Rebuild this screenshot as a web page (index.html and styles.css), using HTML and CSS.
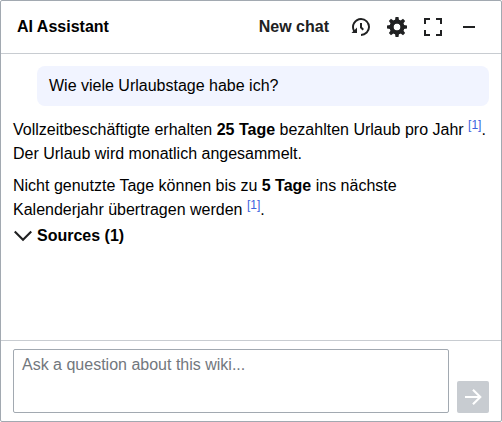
FILE: index.html
```html
<!DOCTYPE html>
<html lang="en">
<head>
<meta charset="utf-8">
<meta name="viewport" content="width=device-width, initial-scale=1">
<title>AI Assistant</title>
<link rel="stylesheet" href="styles.css">
</head>
<body>
<main class="chat">
  <header class="chat-header">
    <h1 class="chat-title">AI Assistant</h1>
    <button class="button" type="button">New chat</button>
    <button class="button button-icon" type="button" aria-label="History">
      <svg class="icon" viewBox="0 0 20 20" aria-hidden="true"><path d="M9 6v5h.06l2.48 2.47 1.41-1.41L11 10.11V6z"/><path d="M10 1a9 9 0 0 0-7.85 13.35L.5 16H6v-5.5l-2.38 2.38A7 7 0 1 1 10 17v2a9 9 0 0 0 0-18"/></svg>
    </button>
    <button class="button button-icon" type="button" aria-label="Settings">
      <svg class="icon" viewBox="0 0 20 20" aria-hidden="true">
        <g transform="translate(10 10)">
          <path id="tooth" d="M1.5-10h-3l-1 6.5h5m0 7h-5l1 6.5h3"/>
          <use href="#tooth" transform="rotate(45)"/>
          <use href="#tooth" transform="rotate(90)"/>
          <use href="#tooth" transform="rotate(135)"/>
        </g>
        <path d="M10 2.5a7.5 7.5 0 0 0 0 15 7.5 7.5 0 0 0 0-15v4a3.5 3.5 0 0 1 0 7 3.5 3.5 0 0 1 0-7"/>
      </svg>
    </button>
    <button class="button button-icon" type="button" aria-label="Full screen">
      <svg class="icon" viewBox="0 0 20 20" aria-hidden="true"><path d="M1 1v6h2V3h4V1zm2 12H1v6h6v-2H3zm14 4h-4v2h6v-6h-2zm0-16h-4v2h4v4h2V1z"/></svg>
    </button>
    <button class="button button-icon" type="button" aria-label="Minimize">
      <svg class="icon" viewBox="0 0 20 20" aria-hidden="true"><path d="M4 9h12v2H4z"/></svg>
    </button>
  </header>

  <section class="messages" aria-label="Conversation">
    <p class="question">Wie viele Urlaubstage habe ich?</p>
    <div class="answer">
      <p>Vollzeitbeschäftigte erhalten <strong>25 Tage</strong> bezahlten Urlaub pro Jahr <sup><a href="#sources">[1]</a></sup>. Der Urlaub wird monatlich angesammelt.</p>
      <p>Nicht genutzte Tage können bis zu <strong>5 Tage</strong> ins nächste Kalenderjahr übertragen werden <sup><a href="#sources">[1]</a></sup>.</p>
    </div>
    <button class="sources" id="sources" type="button" aria-expanded="false">
      <svg class="icon" viewBox="0 0 20 20" aria-hidden="true"><path d="m17.5 4.75-7.5 7.5-7.5-7.5L1 6.25l9 9 9-9z"/></svg>
      Sources (1)
    </button>
  </section>

  <form class="composer">
    <textarea class="composer-input" aria-label="Question" placeholder="Ask a question about this wiki..."></textarea>
    <button class="send" type="submit" aria-label="Send" disabled>
      <svg class="icon" viewBox="0 0 20 20" aria-hidden="true"><path d="M10.7 1.9 9.2 3.4 14.8 9H2v2h12.8l-5.6 5.6 1.5 1.5 8.1-8.1z"/></svg>
    </button>
  </form>
</main>
</body>
</html>
```
FILE: styles.css
```css
* {
  box-sizing: border-box;
}

body {
  margin: 0;
  background: #fff;
  color: #101418;
  font: 16px/24px "Liberation Sans", Arial, sans-serif;
}

p,
h1 {
  margin: 0;
}

button,
textarea {
  font: inherit;
  color: inherit;
}

.chat {
  display: flex;
  flex-direction: column;
  min-height: 100vh;
  border: 1px solid #a2a9b1;
  border-radius: 2px;
}

.chat-header {
  display: flex;
  align-items: center;
  gap: 4px;
  padding: 10px 16px;
  border-bottom: 1px solid #c8ccd1;
}

.chat-title {
  flex: 1;
  font-size: 16px;
  line-height: 24px;
  color: #000;
}

.button {
  height: 32px;
  padding: 0 12px;
  border: 0;
  background: none;
  color: #202122;
  font-weight: bold;
}

.button-icon {
  display: flex;
  align-items: center;
  justify-content: center;
  width: 32px;
  padding: 0;
}

.icon {
  display: block;
  flex: none;
  width: 20px;
  height: 20px;
  fill: currentColor;
}

.messages {
  flex: 1;
  padding: 12px;
  color: #000;
}

.question {
  margin: 0 0 12px 24px;
  padding: 8px 12px;
  border-radius: 8px;
  background: #f1f4ff;
}

.answer p + p {
  margin-top: 8px;
}

sup {
  font-size: 12px;
  line-height: 1;
}

sup a {
  color: #3a62de;
  text-decoration: none;
}

.sources {
  display: flex;
  align-items: center;
  gap: 4px;
  margin-top: 2px;
  padding: 0;
  border: 0;
  background: none;
  font-weight: bold;
}

.sources .icon {
  fill: #202122;
}

.composer {
  display: flex;
  align-items: flex-end;
  gap: 8px;
  padding: 8px 12px;
  border-top: 1px solid #c8ccd1;
}

.composer-input {
  flex: 1;
  min-width: 0;
  height: 64px;
  padding: 4px 8px;
  border: 1px solid #a2a9b1;
  border-radius: 2px;
  background: #fff;
  line-height: 22px;
  resize: none;
}

.composer-input::placeholder {
  color: #72777d;
}

.send {
  display: flex;
  align-items: center;
  justify-content: center;
  width: 32px;
  height: 32px;
  padding: 0;
  border: 0;
  border-radius: 2px;
  background: #c8ccd1;
  color: #fff;
}
```
